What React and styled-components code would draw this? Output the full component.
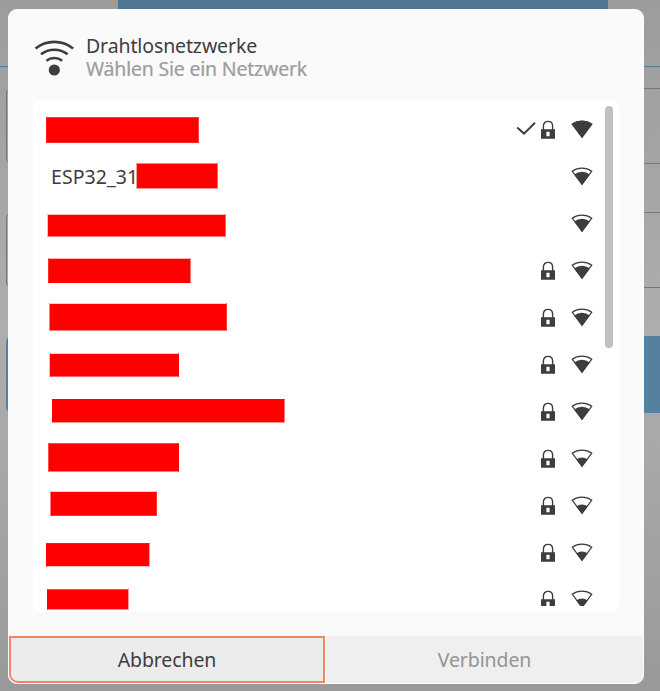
import React from "react";
import styled, { createGlobalStyle } from "styled-components";

const INK = "#3d3d3d";

const GlobalStyle = createGlobalStyle`
  * { box-sizing: border-box; }
  body { margin: 0; overflow: hidden; font-family: "Noto Sans", "Open Sans", sans-serif; color: ${INK}; }
  svg { display: block; flex: none; }
`;

const Desktop = styled.div`
  position: relative;
  width: 660px;
  height: 691px;
  overflow: hidden;
  background: linear-gradient(#9c9c9c 0, #a5a5a5 180px, #adadad 330px, #a8a8a8 450px, #999 691px);
`;

const Backdrop = styled.div`
  display: flex;
  flex-direction: column;
  height: 100%;
`;

const BackdropTab = styled.div`
  width: 490px;
  height: 66px;
  margin-left: 118px;
  background: #507691;
`;

const BackdropRule = styled.div`
  height: 1px;
  margin-bottom: 21px;
  background: #4f7b99;
`;

const BackdropField = styled.div`
  width: 680px;
  height: 76px;
  margin: 0 0 48px 6px;
  border: 1px solid #767676;
  border-radius: 6px;
`;

const BackdropButton = styled.div`
  width: 680px;
  height: 77px;
  margin-left: 6px;
  border-radius: 6px;
  background: #55809f;
`;

const Dialog = styled.section`
  position: absolute;
  left: 8px;
  top: 9px;
  width: 636px;
  height: 675px;
  display: flex;
  flex-direction: column;
  border: 1px solid #fdfdfd;
  border-radius: 9px;
  background: #fafafa;
  overflow: hidden;
`;

const Header = styled.header`
  display: flex;
  align-items: flex-start;
  height: 90px;
  padding: 24px 0 0 25px;

  > svg { margin-top: 6px; }
`;

const Titles = styled.div`
  display: flex;
  flex-direction: column;
  margin-left: 12px;
`;

const Title = styled.div`
  height: 23px;
  line-height: 23px;
  font-size: 19.5px;
  letter-spacing: ${(p) => p.$tracking};
  white-space: nowrap;
`;

const Subtitle = styled(Title)`
  color: #9c9f9f;
  text-shadow: -0.6px 0 rgba(95, 180, 245, 0.3), 0.6px 0 rgba(240, 185, 110, 0.3);
`;

const NetworkList = styled.div`
  display: flex;
  width: 586px;
  height: 512px;
  margin-left: 24px;
  padding: 6px 6px 6px 0;
  border-radius: 6px;
  background: #fff;
`;

const Rows = styled.div`
  flex: 1;
`;

const Row = styled.div`
  position: relative;
  display: flex;
  justify-content: space-between;
  height: ${(p) => (p.$partial ? 30 : 47)}px;
  padding: 0 12px 0 18px;
`;

const Name = styled.span`
  line-height: 47px;
  font-size: 19.5px;
  letter-spacing: 0.06px;
  white-space: nowrap;
`;

const Indicators = styled.div`
  display: flex;
  align-items: flex-start;
  height: 100%;
  margin-left: auto;
  padding-top: 14px;
  gap: 16px;
  overflow: hidden;
`;

const Security = styled.div`
  display: flex;
  gap: 5px;
`;

const edge = (a) => `rgba(255, 0, 0, ${a})`;

const Redaction = styled.div`
  position: absolute;
  left: ${(p) => p.$box[0]}px;
  top: ${(p) => p.$box[1]}px;
  width: ${(p) => p.$box[2]}px;
  height: ${(p) => p.$box[3]}px;
  border: 1px solid;
  border-color: ${(p) => p.$edges.map(edge).join(" ")};
  background: #f00;
  background-clip: padding-box;
`;

const ScrollThumb = styled.div`
  width: 8px;
  height: 242px;
  border-radius: 4px;
  background: #c0c0c0;
`;

const Footer = styled.footer`
  display: flex;
  gap: 1px;
  height: 47px;
  margin-top: 24px;
`;

const Button = styled.button`
  flex: ${(p) => (p.$focused ? "0 0 316px" : "1")};
  padding: 0 0 1px;
  border: ${(p) => (p.$focused ? "2px solid #f08763" : "0")};
  border-radius: ${(p) => (p.$focused ? "0 0 0 9px" : "0 0 8px 0")};
  background: ${(p) => (p.$focused ? "#ececec" : "#efefef")};
  color: ${(p) => (p.disabled ? "#929592" : INK)};
  font: 19.5px "Noto Sans", sans-serif;
  letter-spacing: ${(p) => p.$tracking};
`;

const WirelessIcon = () => (
  <svg width="40" height="37" viewBox="0 0 40 37" fill="none" stroke={INK} strokeWidth="2.6">
    <path d="M1.5 8.6A29.8 29.8 0 0 1 39.1 8.6" />
    <path d="M7 14.3A21.5 21.5 0 0 1 33.6 14.3" />
    <path d="M12.4 20.7A13 13 0 0 1 28.2 20.7" />
    <circle cx="20.3" cy="30" r="5.6" fill={INK} stroke="none" />
  </svg>
);

const CheckIcon = () => (
  <svg width="20" height="19" viewBox="0 0 20 19" fill="none" stroke={INK} strokeWidth="2">
    <path d="M1.2 7.6L8 13.6L19 2.8" />
  </svg>
);

const LockIcon = () => (
  <svg width="14" height="19" viewBox="0 0 14 19">
    <path d="M2.4 10V6.1C2.4 3.1 4.4 1.4 7 1.4S11.6 3.1 11.6 6.1V10" fill="none" stroke={INK} strokeWidth="1.4" />
    <path d="M0 9.2H14V18.7H0ZM5.4 11.7V16.3H8.6V11.7Z" fill={INK} fillRule="evenodd" />
  </svg>
);

const SIGNAL_FILL = {
  full: "M.6 4.1A17.4 17.4 0 0 1 21.4 4.1L11 18Z",
  good: "M3.2 7.5A12.8 12.8 0 0 1 18.8 7.5L11 18Z",
  weak: "M5.3 10.4A9.2 9.2 0 0 1 16.7 10.4L11 18Z",
};

const SignalIcon = ({ level }) => (
  <svg width="22" height="19" viewBox="0 0 22 19">
    <path d="M1.2 4.2A16.8 16.8 0 0 1 20.8 4.2L11 17.3Z" fill="none" stroke={INK} strokeWidth="1.2" />
    <path d={SIGNAL_FILL[level]} fill={INK} />
  </svg>
);

const NETWORKS = [
  { level: "full", lock: true, active: true, box: [13, 11, 153, 26], edges: [0.8, 0.75, 0.85, 0.9] },
  { name: "ESP32_31", level: "good", box: [103, 10, 82, 26], edges: [0.5, 0.6, 0.4, 0.4] },
  { level: "good", box: [14, 14, 179, 23], edges: [0.3, 0.6, 0.5, 0.25] },
  { level: "good", lock: true, box: [15, 11, 143, 25], edges: [0.3, 0.5, 1, 0.8] },
  { level: "good", lock: true, box: [16, 9, 178, 28], edges: [0.2, 0.8, 0.5, 0.5] },
  { level: "good", lock: true, box: [16, 12, 130, 24], edges: [0.2, 1, 0.6, 0.3] },
  { level: "good", lock: true, box: [19, 11, 233, 24], edges: [1, 0.5, 0.4, 1] },
  { level: "weak", lock: true, box: [15, 8, 131, 29], edges: [0.7, 1, 0.5, 0.7] },
  { level: "weak", lock: true, box: [17, 9, 107, 25], edges: [0.2, 0.8, 0.8, 0.5] },
  { level: "weak", lock: true, box: [13, 14, 104, 24], edges: [0.9, 0.4, 0.2, 1] },
  { level: "weak", lock: true, box: [14, 13, 82, 21], edges: [0.7, 0.4, 0.4, 1] },
];

const NetworkRow = ({ network, partial }) => (
  <Row $partial={partial}>
    {network.name && <Name>{network.name}</Name>}
    <Indicators>
      <Security>
        {network.active && <CheckIcon />}
        {network.lock && <LockIcon />}
      </Security>
      <SignalIcon level={network.level} />
    </Indicators>
    <Redaction $box={network.box} $edges={network.edges} />
  </Row>
);

export default function App() {
  return (
    <Desktop>
      <GlobalStyle />
      <Backdrop>
        <BackdropTab />
        <BackdropRule />
        <BackdropField />
        <BackdropField />
        <BackdropButton />
      </Backdrop>
      <Dialog>
        <Header>
          <WirelessIcon />
          <Titles>
            <Title $tracking="-0.12px">Drahtlosnetzwerke</Title>
            <Subtitle $tracking="-0.2px">Wählen Sie ein Netzwerk</Subtitle>
          </Titles>
        </Header>
        <NetworkList>
          <Rows>
            {NETWORKS.map((network, i) => (
              <NetworkRow key={i} network={network} partial={i === NETWORKS.length - 1} />
            ))}
          </Rows>
          <ScrollThumb />
        </NetworkList>
        <Footer>
          <Button $focused $tracking="-0.1px">Abbrechen</Button>
          <Button disabled $tracking="-0.1px">Verbinden</Button>
        </Footer>
      </Dialog>
    </Desktop>
  );
}
